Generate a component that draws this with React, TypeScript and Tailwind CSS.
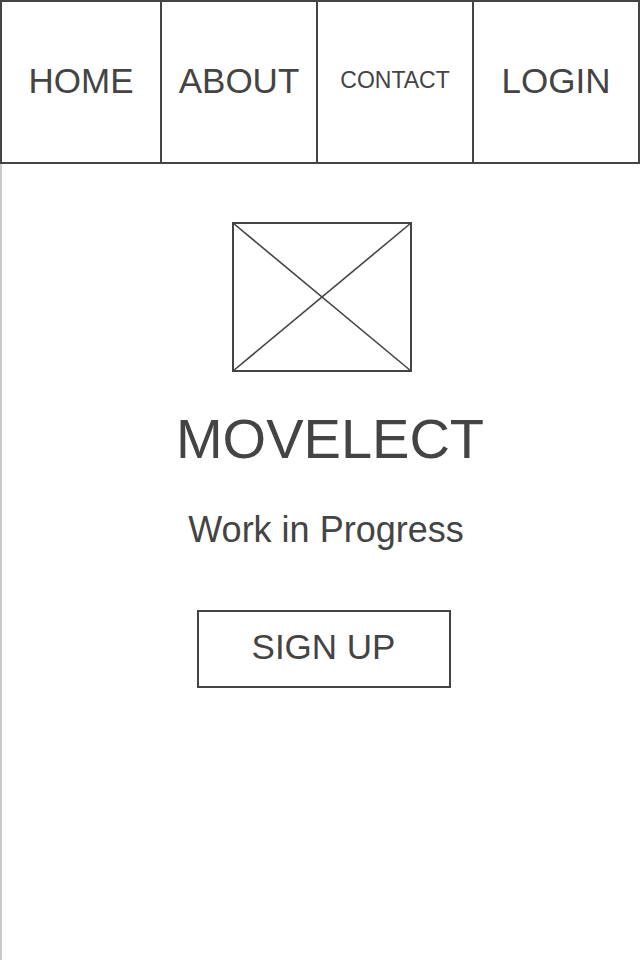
const navItems = [
  { label: 'HOME', width: 'w-[158px]', size: 'text-[35px]' },
  { label: 'ABOUT', width: 'w-[156px]', size: 'text-[35px]' },
  { label: 'CONTACT', width: 'w-[156px]', size: 'text-[23px]' },
  { label: 'LOGIN', width: 'flex-1', size: 'text-[35px]' },
];

export default function App() {
  return (
    <div
      className="min-h-screen bg-white text-[#444]"
      style={{ fontFamily: '"Liberation Sans", Arial, sans-serif' }}
    >
      {/* top nav */}
      <nav className="flex h-[164px] border-2 border-[#444]">
        {navItems.map((item, i) => (
          <a
            key={item.label}
            href="#"
            className={`${item.width} ${item.size} ${i > 0 ? 'border-l-2 border-[#444]' : ''} flex items-center justify-center pb-[4px] leading-none`}
          >
            {item.label}
          </a>
        ))}
      </nav>

      <main className="flex min-h-[796px] flex-col items-center border-l-2 border-[#cccccc] pt-[58px]">
        {/* image placeholder */}
        <svg width="180" height="150" viewBox="0 0 180 150" className="ml-[1px] block">
          <rect x="1" y="1" width="178" height="148" fill="none" stroke="#444" strokeWidth="2" />
          <line x1="1" y1="1" x2="179" y2="149" stroke="#444" strokeWidth="1.6" />
          <line x1="179" y1="1" x2="1" y2="149" stroke="#444" strokeWidth="1.6" />
        </svg>

        <h1 className="ml-[18px] mt-[39px] text-[56px] leading-none">MOVELECT</h1>

        <p className="ml-[10px] mt-[45px] text-[36px] leading-none">Work in Progress</p>

        <button className="ml-[5px] mt-[62px] flex h-[78px] w-[254px] items-center justify-center border-2 border-[#444] pb-[5px] text-[35px] leading-none">
          SIGN UP
        </button>
      </main>
    </div>
  );
}
